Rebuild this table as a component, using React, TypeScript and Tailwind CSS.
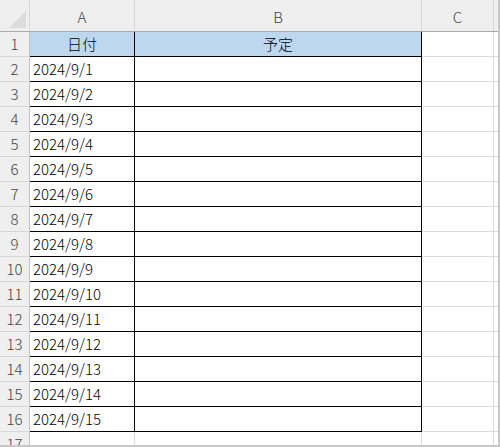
const FONT = '"Noto Sans CJK JP", "Noto Sans", sans-serif'

const dates = Array.from({ length: 15 }, (_, i) => `2024/9/${i + 1}`)

function RowHead({ n }: { n: number }) {
  return (
    <div className="w-[30px] shrink-0 flex items-center justify-center bg-[#efefef] border-r border-b border-r-[#c4c4c4] border-b-[#d6d6d6] text-[15px] text-[#444]">
      {n}
    </div>
  )
}

export default function App() {
  return (
    <div
      className="w-[500px] h-[447px] overflow-hidden bg-white border-r-2 border-b-2 border-[#c8c8c8] flex flex-col font-light"
      style={{ fontFamily: FONT }}
    >
      {/* column headers */}
      <div className="flex h-[32px] shrink-0 bg-[#efefef] border-b border-[#ababab] text-[15px] text-[#444]">
        <div className="w-[30px] shrink-0 relative border-r border-[#d6d6d6]">
          <div className="absolute right-[3px] bottom-[3px] w-0 h-0 border-l-[17px] border-l-transparent border-b-[17px] border-b-[#dcdcdc]" />
        </div>
        <div className="w-[105px] shrink-0 flex items-center justify-center pt-[4px] border-r border-[#d6d6d6]">A</div>
        <div className="w-[287px] shrink-0 flex items-center justify-center pt-[4px] border-r border-[#d6d6d6]">B</div>
        <div className="w-[72px] shrink-0 flex items-center justify-center pt-[4px] border-r border-[#d6d6d6]">C</div>
        <div className="flex-1" />
      </div>

      {/* row 1 */}
      <div className="flex h-[25px] shrink-0 text-[15px] text-black">
        <RowHead n={1} />
        <div className="w-[105px] shrink-0 flex items-center justify-center bg-[#bdd7ee] border-r border-b border-black">日付</div>
        <div className="w-[287px] shrink-0 flex items-center justify-center bg-[#bdd7ee] border-r border-b border-black">予定</div>
        <div className="w-[72px] shrink-0 border-r border-b border-[#dadada]" />
        <div className="flex-1 border-b border-[#dadada]" />
      </div>

      {dates.map((d, i) => (
        <div key={d} className="flex h-[25px] shrink-0 text-[15px] text-black">
          <RowHead n={i + 2} />
          <div className="w-[105px] shrink-0 flex items-center pl-[3px] border-r border-b border-black">{d}</div>
          <div className="w-[287px] shrink-0 border-r border-b border-black" />
          <div className="w-[72px] shrink-0 border-r border-b border-[#dadada]" />
          <div className="flex-1 border-b border-[#dadada]" />
        </div>
      ))}

      {/* row 17, cut off by the window edge */}
      <div className="flex h-[25px] shrink-0 text-[15px] text-black">
        <RowHead n={17} />
        <div className="w-[105px] shrink-0 border-r border-[#dadada]" />
        <div className="w-[287px] shrink-0 border-r border-[#dadada]" />
        <div className="w-[72px] shrink-0 border-r border-[#dadada]" />
        <div className="flex-1" />
      </div>
    </div>
  )
}
